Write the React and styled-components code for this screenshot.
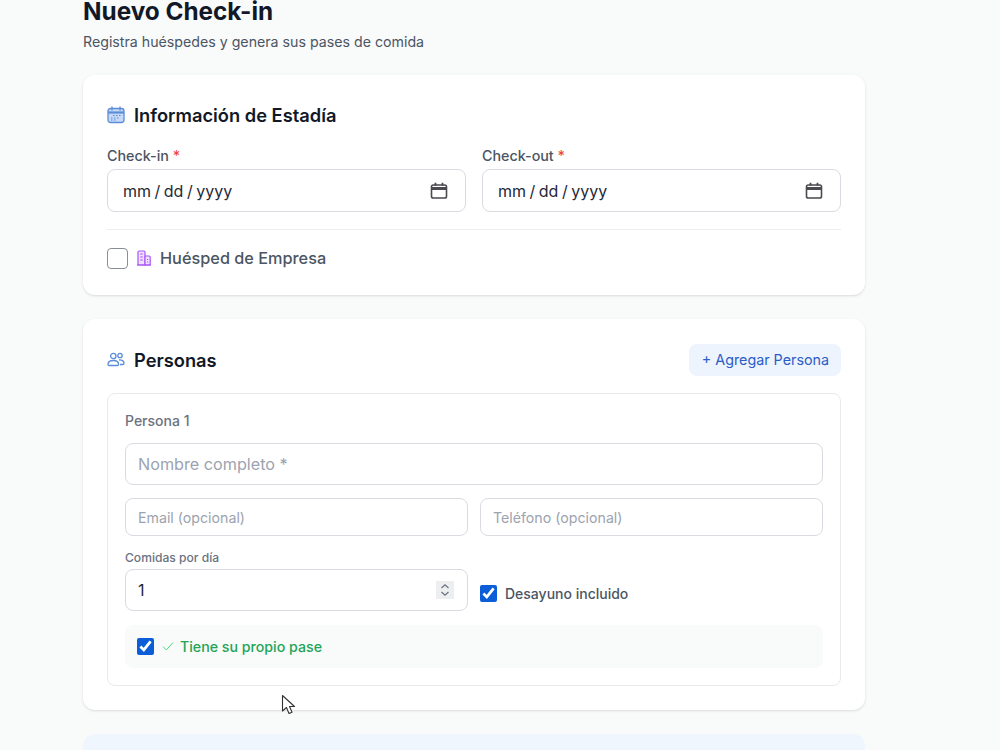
import React from 'react';
import styled, {createGlobalStyle} from 'styled-components';

const GlobalStyle = createGlobalStyle`
  html, body {
    margin: 0;
    padding: 0;
    background: #f9fafa;
    overflow: hidden;
  }
  * { box-sizing: border-box; }
`;

const Page = styled.div`
  height: 750px;
  overflow: hidden;
  position: relative;
  background: #f9fafa;
  font-family: Inter, "Liberation Sans", sans-serif;
  color: #111827;
`;

const Content = styled.main`
  width: 782px;
  margin-left: 83px;
  display: flex;
  flex-direction: column;
  gap: 24px;
`;

const Header = styled.header`
  height: 51px;
`;

const Title = styled.h1`
  margin: 0;
  font-size: 24.3px;
  line-height: 22px;
  font-weight: 700;
  color: #111827;
`;

const Subtitle = styled.p`
  margin: 10px 0 0;
  font-size: 14.2px;
  line-height: 20px;
  color: #4b5563;
`;

const Card = styled.section`
  background: #fff;
  border-radius: 12px;
  box-shadow: 0 1px 3px rgba(0, 0, 0, 0.1), 0 1px 2px -1px rgba(0, 0, 0, 0.1);
  padding: 24px;
`;

const Notice = styled.section`
  background: #eff6fd;
  border-radius: 12px;
  height: 120px;
`;

const CardHead = styled.div`
  display: flex;
  align-items: center;
  justify-content: space-between;
  height: ${p => p.$height}px;
  margin-bottom: ${p => p.$gap}px;
`;

const CardTitle = styled.h2`
  margin: 0;
  display: flex;
  align-items: center;
  gap: 9px;
  font-size: 18.3px;
  line-height: 28px;
  font-weight: 600;
  color: #111827;
`;

const AddButton = styled.button`
  height: 32px;
  padding: 0 12px 0 13px;
  border: 0;
  border-radius: 8px;
  background: #edf4fd;
  color: #2b5cc8;
  font: 400 14.3px/20px Inter, "Liberation Sans", sans-serif;
`;

const DateGrid = styled.div`
  display: grid;
  grid-template-columns: 1fr 1fr;
  gap: 16px;
`;

const Label = styled.label`
  display: block;
  margin-bottom: 4px;
  font-size: 14.3px;
  line-height: 18px;
  font-weight: 500;
  color: #4b5563;
`;

const Required = styled.span`
  color: #ef4444;
`;

const Field = styled.div`
  display: flex;
  align-items: center;
  justify-content: space-between;
  height: 43px;
  padding: 0 17px 0 15px;
  background: #fff;
  border: 1px solid #d8dce1;
  border-radius: 8px;
  font-size: 16px;
  color: #1f2937;
`;

const NumberField = styled(Field)`
  height: 42px;
  padding: 0 12px;
`;

const DateText = styled.span`
  word-spacing: -1px;
`;

const TextInput = styled.input`
  display: block;
  width: 100%;
  height: ${p => (p.$small ? 38 : 42)}px;
  padding: 0 12px;
  background: #fff;
  border: 1px solid #d8dce1;
  border-radius: 8px;
  font: 400 ${p => (p.$small ? 14.2 : 16.2)}px Inter, "Liberation Sans", sans-serif;
  color: #111827;
  &::placeholder {
    color: #9ca3af;
    opacity: 1;
  }
`;

const Divider = styled.hr`
  margin: 17px 0;
  border: 0;
  border-top: 1px solid #eceef0;
`;

const CompanyRow = styled.label`
  display: flex;
  align-items: center;
  gap: 8px;
  height: 22px;
  margin-bottom: 2px;
  font-size: 16.3px;
  font-weight: 500;
  color: #4b5563;
`;

const Check = styled.input.attrs({type: 'checkbox'})`
  margin: 0;
  flex: none;
  width: 17px;
  height: 17px;
  accent-color: #0b5ed7;
`;

const EmptyCheck = styled.span`
  flex: none;
  width: 21px;
  height: 21px;
  background: #fff;
  border: 1px solid #8a8f96;
  border-radius: 4px;
`;

const PersonBox = styled.div`
  border: 1px solid #e8eaed;
  border-radius: 8px;
  padding: 17px;
  display: flex;
  flex-direction: column;
`;

const PersonName = styled.div`
  font-size: 14px;
  line-height: 20px;
  font-weight: 500;
  color: #6b7280;
  margin-bottom: 12px;
`;

const ContactRow = styled.div`
  display: grid;
  grid-template-columns: 1fr 1fr;
  gap: 12px;
  margin-top: 13px;
`;

const MealsRow = styled.div`
  display: grid;
  grid-template-columns: 1fr 1fr;
  gap: 12px;
  margin-top: 14px;
`;

const SmallLabel = styled.div`
  font-size: 12.1px;
  line-height: 16px;
  font-weight: 500;
  color: #6b7280;
  margin-bottom: 3px;
`;

const Spinner = styled.span`
  display: flex;
  align-items: center;
  justify-content: center;
  width: 18px;
  height: 18px;
  margin-right: 1px;
  background: #eceef0;
`;

const BreakfastLabel = styled.label`
  display: flex;
  align-items: center;
  align-self: end;
  gap: 8px;
  height: 36px;
  font-size: 14px;
  font-weight: 500;
  color: #4b5563;
`;

const PassBox = styled.label`
  display: flex;
  align-items: center;
  gap: 8px;
  height: 43px;
  margin-top: 14px;
  padding: 0 12px;
  border-radius: 8px;
  background: #f9fafa;
`;

const PassText = styled.span`
  font-size: 14.2px;
  font-weight: 500;
  color: #23a557;
`;

const PassMark = styled.svg`
  margin-right: 6px;
`;

const Cursor = styled.svg`
  position: absolute;
  left: 281px;
  top: 694px;
`;

function StayIcon() {
  return (
    <svg width="18" height="18" viewBox="0 0 18 18" fill="none">
      <rect x="1" y="2.5" width="16" height="14" rx="2.5" fill="#c7d9f5" stroke="#5b8dd9" strokeWidth="1.3" />
      <path d="M1 6.5h16" stroke="#5b8dd9" strokeWidth="2.2" />
      <path d="M5 1v3M13 1v3" stroke="#5b8dd9" strokeWidth="1.3" strokeLinecap="round" />
      <path d="M6 9.5h1.5M9 9.5h1.5M12 9.5h1.5M4 12h1.5M7 12h1.5M10 12h1.5M4 14h1.5M7 14h1.5" stroke="#5b8dd9" strokeWidth="1.1" />
    </svg>
  );
}

function CompanyIcon() {
  return (
    <svg width="16" height="16" viewBox="0 0 16 16" fill="none" stroke="#a855f7" strokeWidth="1.2">
      <path d="M2 15V2.2C2 1.5 2.5 1 3.2 1h4.6C8.5 1 9 1.5 9 2.2V15z" fill="#f0e2fd" />
      <path d="M9 6h4c.7 0 1.2.5 1.2 1.2V15H9z" fill="#f0e2fd" />
      <path d="M1 15h14M4.2 4h2.6M4.2 7h2.6M4.2 10h2.6M11 9.5h1.2M11 12h1.2" />
    </svg>
  );
}

function PeopleIcon() {
  return (
    <svg width="18" height="18" viewBox="0 0 18 18" fill="none" stroke="#5b8dd9" strokeWidth="1.3">
      <circle cx="6.3" cy="5" r="2.7" />
      <circle cx="13" cy="4.5" r="2.2" />
      <path d="M1 13.5c0-2.5 2.3-4 5.300-4s5.300 1.500 5.300 4c0 .8-.6 1-1.300 1H2.300c-.7 0-1.300-.2-1.300-1z" />
      <path d="M12 9c2.800-.3 5 .9 5 3.300 0 .8-.5 1.200-1.200 1.200H13" />
    </svg>
  );
}

function DateIcon() {
  return (
    <svg width="18" height="18" viewBox="0 0 18 18" fill="none" stroke="#4a4a4f" strokeWidth="1.6">
      <rect x="1.5" y="3" width="15" height="13" rx="1.8" />
      <path d="M1.5 6.5h15" strokeWidth="3" />
      <path d="M5.5 .8v3M12.5 .8v3" strokeWidth="1.8" />
    </svg>
  );
}

function DateField() {
  return (
    <Field>
      <DateText>mm / dd / yyyy</DateText>
      <DateIcon />
    </Field>
  );
}

function SpinnerIcon() {
  return (
    <svg width="10" height="16" viewBox="0 0 10 16" fill="none" stroke="#6b7280" strokeWidth="1.2">
      <path d="M1.5 6L5 2.8 8.5 6M1.5 10L5 13.2 8.5 10" />
    </svg>
  );
}

function App() {
  return (
    <Page>
      <GlobalStyle />
      <Content>
        <Header>
          <Title>Nuevo Check-in</Title>
          <Subtitle>Registra huéspedes y genera sus pases de comida</Subtitle>
        </Header>

        <Card>
          <CardHead $height={32} $gap={16}>
            <CardTitle><StayIcon /> Información de Estadía</CardTitle>
          </CardHead>
          <DateGrid>
            <div>
              <Label>Check-in <Required>*</Required></Label>
              <DateField />
            </div>
            <div>
              <Label>Check-out <Required>*</Required></Label>
              <DateField />
            </div>
          </DateGrid>
          <Divider />
          <CompanyRow>
            <EmptyCheck />
            <CompanyIcon />
            Huésped de Empresa
          </CompanyRow>
        </Card>

        <Card>
          <CardHead $height={34} $gap={16}>
            <CardTitle><PeopleIcon /> Personas</CardTitle>
            <AddButton>+ Agregar Persona</AddButton>
          </CardHead>
          <PersonBox>
            <PersonName>Persona 1</PersonName>
            <TextInput placeholder="Nombre completo *" />
            <ContactRow>
              <TextInput $small placeholder="Email (opcional)" />
              <TextInput $small placeholder="Teléfono (opcional)" />
            </ContactRow>
            <MealsRow>
              <div>
                <SmallLabel>Comidas por día</SmallLabel>
                <NumberField>
                  <span>1</span>
                  <Spinner><SpinnerIcon /></Spinner>
                </NumberField>
              </div>
              <BreakfastLabel>
                <Check defaultChecked />
                Desayuno incluido
              </BreakfastLabel>
            </MealsRow>
            <PassBox>
              <Check defaultChecked />
              <PassText>
                <PassMark width="12" height="12" viewBox="0 0 12 12" fill="none" stroke="#4ade80" strokeWidth="1">
                  <path d="M1 6.5L4.3 10 11 2.5" />
                </PassMark>
                Tiene su propio pase
              </PassText>
            </PassBox>
          </PersonBox>
        </Card>

        <Notice />
      </Content>
      <Cursor width="16" height="22" viewBox="0 0 16 22">
        <path d="M1.5 1.5V17l4-3.5 2.5 6 3-1.3-2.5-5.700h5z" fill="#fff" stroke="#333" strokeWidth="1.1" strokeLinejoin="round" />
      </Cursor>
    </Page>
  );
}

export default App;
